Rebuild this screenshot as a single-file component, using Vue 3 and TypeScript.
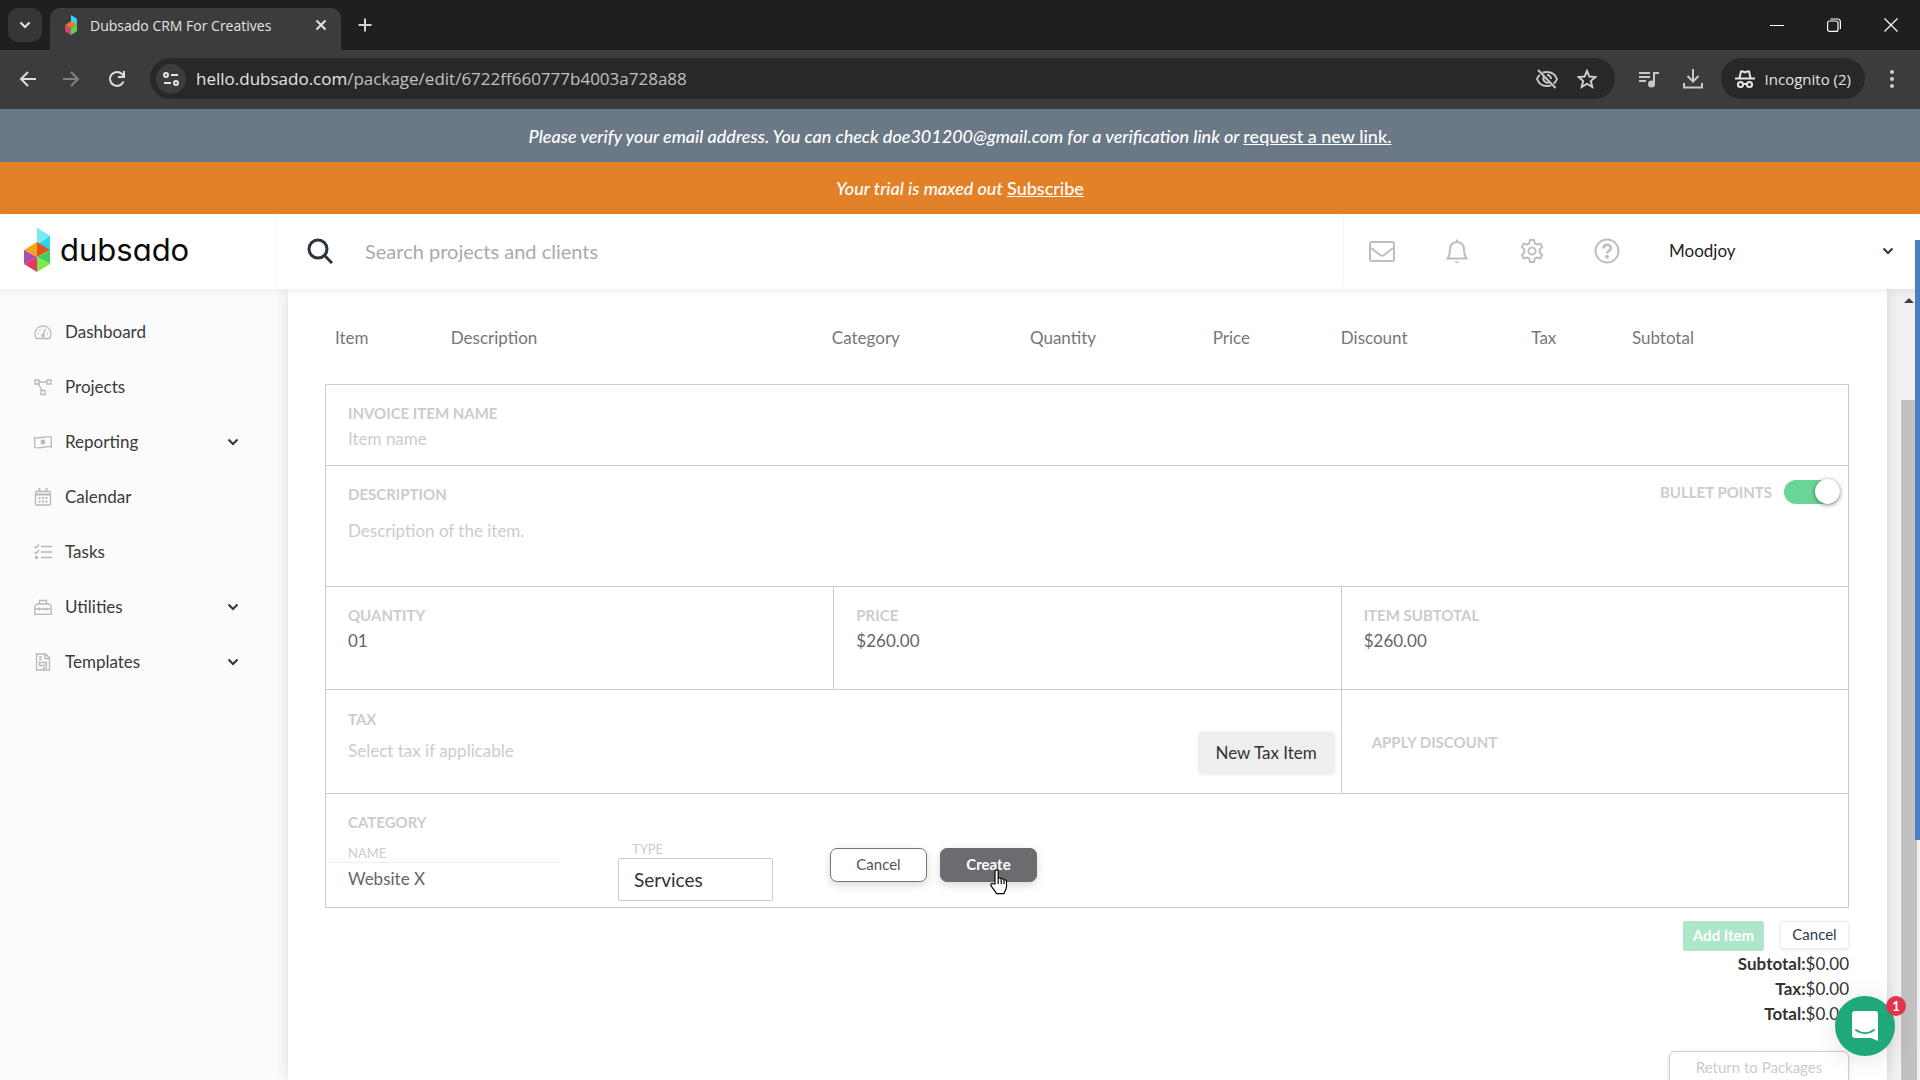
<script setup lang="ts">
import { ref } from 'vue'

interface NavItem {
  label: string
  icon: string
  expandable: boolean
}

const navItems: NavItem[] = [
  { label: 'Dashboard', icon: 'gauge', expandable: false },
  { label: 'Projects', icon: 'nodes', expandable: false },
  { label: 'Reporting', icon: 'money', expandable: true },
  { label: 'Calendar', icon: 'calendar', expandable: false },
  { label: 'Tasks', icon: 'tasks', expandable: false },
  { label: 'Utilities', icon: 'toolbox', expandable: true },
  { label: 'Templates', icon: 'doc', expandable: true },
]

const columns: string[] = ['Item', 'Description', 'Category', 'Quantity', 'Price', 'Discount', 'Tax', 'Subtotal']

const totals = [
  { label: 'Subtotal:', value: '$0.00' },
  { label: 'Tax:', value: '$0.00' },
  { label: 'Total:', value: '$0.00' },
]

const search = ref('')
const itemName = ref('')
const description = ref('')
const bulletPoints = ref(true)
const quantity = ref('01')
const price = ref('$260.00')
const subtotal = ref('$260.00')
const tax = ref('')
const categoryName = ref('Website X')
const categoryType = ref('Services')
</script>

<template>
  <div class="window">
    <div class="tabstrip">
      <button class="tab-search" aria-label="Search tabs">
        <svg width="14" height="14" viewBox="0 0 14 14" fill="none" stroke="#e4e4e4" stroke-width="2"><path d="M2.5 4.5 7 9l4.500-4.500" /></svg>
      </button>
      <div class="tab">
        <svg width="14" height="20" viewBox="0 0 26 44">
          <polygon points="13,0 26,8 26,24 13,17" fill="#37d6f0" />
          <polygon points="0,22 13,14 26,22 13,29" fill="#ee7a22" />
          <polygon points="0,22 13,29 13,44 0,36" fill="#d8407a" />
          <polygon points="13,29 26,22 26,36 13,44" fill="#58d84c" />
        </svg>
        <span class="tab-title">Dubsado CRM For Creatives</span>
        <button class="plain" aria-label="Close tab">
          <svg width="14" height="14" viewBox="0 0 14 14" stroke="#e4e4e4" stroke-width="2"><path d="M2.500 2.500l9 9M11.500 2.500l-9 9" /></svg>
        </button>
      </div>
      <button class="plain new-tab" aria-label="New tab">
        <svg width="16" height="16" viewBox="0 0 16 16" stroke="#d4d4d4" stroke-width="2"><path d="M8 1.500v13M1.500 8h13" /></svg>
      </button>
      <div class="window-controls">
        <button class="plain" aria-label="Minimize"><svg width="14" height="14" viewBox="0 0 14 14" stroke="#fff"><path d="M0 7.500h14" /></svg></button>
        <button class="plain" aria-label="Restore"><svg width="14" height="14" viewBox="0 0 14 14" fill="none" stroke="#fff" stroke-width="1.200"><rect x=".6" y="3" width="10.400" height="10.400" rx="2" /><path d="M3.400 1h7a3 3 0 0 1 3 3v7" /></svg></button>
        <button class="plain" aria-label="Close"><svg width="14" height="14" viewBox="0 0 14 14" stroke="#fff" stroke-width="1.200"><path d="M.5.5l13 13M13.500.5l-13 13" /></svg></button>
      </div>
    </div>

    <div class="toolbar">
      <button class="plain nav" aria-label="Back"><svg width="18" height="18" viewBox="0 0 18 18" fill="none" stroke="#dcdcdc" stroke-width="2"><path d="M17 9H2.500M9 2 2 9l7 7" /></svg></button>
      <button class="plain nav" aria-label="Forward"><svg width="18" height="18" viewBox="0 0 18 18" fill="none" stroke="#808080" stroke-width="2"><path d="M1 9h14.500M9 2l7 7-7 7" /></svg></button>
      <button class="plain nav" aria-label="Reload"><svg width="18" height="18" viewBox="0 0 18 18" fill="none" stroke="#dcdcdc" stroke-width="2"><path d="M15.500 11.500A7 7 0 1 1 14 4l2 2.500" /><path d="M16 1v6h-6" /></svg></button>
      <div class="address">
        <span class="site-info">
          <svg width="18" height="16" viewBox="0 0 18 16" fill="none" stroke="#e4e4e4" stroke-width="2"><circle cx="4" cy="4" r="2" /><path d="M9 4h7M2 12h7" /><circle cx="14" cy="12" r="2" /></svg>
        </span>
        <span class="url">hello.dubsado.com<span class="path">/package/edit/6722ff660777b4003a728a88</span></span>
        <button class="plain chip" aria-label="Tracking blocked"><svg width="24" height="22" viewBox="0 0 24 22" fill="none" stroke="#c8c8c8" stroke-width="2"><path d="M7.500 4.700A11 11 0 0 1 12 4c5 0 8.500 3 10 7-.7 1.800-1.800 3.400-3.300 4.600M16 17.300c-1.200.5-2.600.7-4 .7-5 0-8.500-3-10-7 .6-1.600 1.500-3 2.700-4.100" /><path d="M3 2l17.500 18" /><path d="M9 8.500a4 4 0 0 0 5.500 5.500M12 7a4 4 0 0 1 4 4" /></svg></button>
        <button class="plain chip" aria-label="Bookmark"><svg width="20" height="20" viewBox="0 0 20 20" fill="none" stroke="#d0d0d0" stroke-width="1.900"><path d="M10 1.800l2.400 5.700 6.100.5-4.700 4 1.500 6L10 14.800 4.700 18l1.500-6-4.700-4 6.100-.5z" /></svg></button>
      </div>
      <button class="plain media" aria-label="Media"><svg width="22" height="18" viewBox="0 0 22 18" fill="none" stroke="#c8c8c8" stroke-width="2"><path d="M1 3h11M1 7h11M1 11h7M16 14V3h5" /><circle cx="13.500" cy="14" r="2.500" fill="#c8c8c8" /></svg></button>
      <button class="plain media" aria-label="Downloads"><svg width="22" height="22" viewBox="0 0 22 22" fill="none" stroke="#c8c8c8" stroke-width="2"><path d="M11 1v12M5.500 8l5.500 5.500L16.500 8M2 15v4.500h18V15" /></svg></button>
      <button class="incognito">
        <svg width="20" height="20" viewBox="0 0 20 20" fill="none" stroke="#e4e4e4" stroke-width="2"><path d="M0 9.500h20M4.500 9l1.500-6.500h2L10 3.500l2-1h2L15.500 9" /><circle cx="5.500" cy="15.500" r="2.600" /><circle cx="14.500" cy="15.500" r="2.600" /><path d="M8 15h4" /></svg>
        Incognito (2)
      </button>
      <button class="plain kebab" aria-label="Menu"><svg width="4" height="18" viewBox="0 0 4 18" fill="#d0d0d0"><circle cx="2" cy="2" r="2" /><circle cx="2" cy="9" r="2" /><circle cx="2" cy="16" r="2" /></svg></button>
    </div>

    <div class="page">
      <p class="banner verify"><em>Please verify your email address. You can check doe301200@gmail.com for a verification link or&nbsp;</em><a href="#">request a new link.</a></p>
      <p class="banner trial"><em>Your trial is maxed out&nbsp;</em><a href="#">Subscribe</a></p>

      <header class="topbar">
        <a class="brand" href="#">
          <svg width="26" height="44" viewBox="0 0 26 44">
            <polygon points="13,0 26,8 26,24 13,17" fill="#2fd3ee" />
            <polygon points="13,0 26,8 13,17" fill="#7beaf6" />
            <polygon points="0,22 13,14 13,29" fill="#f5a31c" />
            <polygon points="13,14 26,22 13,29" fill="#e2521f" />
            <polygon points="0,22 13,29 0,36" fill="#a44fb0" />
            <polygon points="13,29 13,44 0,36" fill="#e23a60" />
            <polygon points="13,29 26,22 26,36" fill="#3fcf5e" />
            <polygon points="13,29 26,36 13,44" fill="#7ee84a" />
          </svg>
          <span>dubsado</span>
        </a>
        <label class="search">
          <svg width="26" height="26" viewBox="0 0 26 26" fill="none" stroke="#2b3440" stroke-width="3"><circle cx="11" cy="11" r="9" /><path d="M17.500 17.500 25 25" /></svg>
          <input v-model="search" type="text" placeholder="Search projects and clients" aria-label="Search projects and clients" />
        </label>
        <nav class="top-icons">
          <button class="plain" aria-label="Mail"><svg width="26" height="26" viewBox="0 0 26 26" fill="none" stroke="#bcbfc2" stroke-width="2"><rect x="1" y="4" width="24" height="19" rx="2" /><path d="M2 10l9 7q2 1.500 4 0l9-7" /></svg></button>
          <button class="plain" aria-label="Notifications"><svg width="26" height="26" viewBox="0 0 26 26" fill="none" stroke="#bcbfc2" stroke-width="2"><path d="M13 1.500v2M3.500 20.500C5 18.500 6 17 6 11a7 7 0 0 1 14 0c0 6 1 7.500 2.500 9.500z" /><path d="M10 23.500h6l-3 2z" fill="#bcbfc2" stroke="none" /></svg></button>
          <button class="plain" aria-label="Settings"><svg width="26" height="26" viewBox="0 0 26 26" fill="none" stroke="#bcbfc2" stroke-width="2" stroke-linejoin="round"><circle cx="13" cy="13" r="3.600" /><path d="M11 2h4l.7 3.300 2.300 1.300 3.200-1.100 2 3.500-2.500 2.200v3.600l2.500 2.200-2 3.500-3.200-1.100-2.300 1.300L15 24h-4l-.7-3.300L8 19.400l-3.200 1.100-2-3.500 2.500-2.200v-3.600L2.800 9l2-3.500L8 6.600l2.300-1.300z" /></svg></button>
          <button class="plain" aria-label="Help"><svg width="26" height="26" viewBox="0 0 26 26" fill="none" stroke="#bcbfc2" stroke-width="2"><circle cx="13" cy="13" r="11.500" /><path d="M9.500 10.500c0-5 7.500-4.500 7.500-.5 0 2.500-4 2.700-4 5.500" stroke-width="2.600" /><circle cx="13" cy="18.800" r="1" fill="#bcbfc2" /></svg></button>
        </nav>
        <button class="account">
          <span>Moodjoy</span>
          <svg width="12" height="12" viewBox="0 0 12 12" fill="none" stroke="#2b3440" stroke-width="2"><path d="M1.500 3.500 6 8l4.500-4.500" /></svg>
        </button>
      </header>

      <div class="body">
        <aside class="sidebar">
          <a v-for="item in navItems" :key="item.label" href="#" class="side-item">
            <svg width="18" height="18" viewBox="0 0 18 18" fill="none" stroke="#b6b9bc" stroke-width="1.300">
              <template v-if="item.icon === 'gauge'"><path d="M2.500 15.500A8 8 0 1 1 15.500 15.500zM9 12.500l2.500-6.500" /><circle cx="9" cy="12.500" r="1.200" /><path d="M4 10.500h1M5.500 6.500l.8.800M9 4.500v1M13 10.500h1" /></template>
              <template v-else-if="item.icon === 'nodes'"><path d="M1 2h4v4H1zM13 2h4v4h-4zM7 12.500h4v4H7zM5 4h8M4.500 6l3.500 6.500" /></template>
              <template v-else-if="item.icon === 'money'"><path d="M.7 4.500c5.500 2 11-2.500 16.600-.5v10c-5.500-2-11 2.500-16.600.5z" /><circle cx="9" cy="9" r="1.800" fill="#b6b9bc" /></template>
              <template v-else-if="item.icon === 'calendar'"><rect x="1.500" y="3.500" width="15" height="13.500" rx="1" /><path d="M1.500 6.500h15M5.500 0v4M12.500 0v4" stroke-width="1.800" /><path d="M4.500 10h9M4.500 13.500h9" stroke-width="2" stroke-dasharray="2 1.500" /></template>
              <template v-else-if="item.icon === 'tasks'"><path d="M7 3.500h11M7 9h11M7 14.500h11" stroke-width="1.600" /><path d="M.5 3.500 2 5l3-3.500M.5 9 2 10.500 5 7" /><circle cx="2.500" cy="14.500" r="1" fill="#b6b9bc" /></template>
              <template v-else-if="item.icon === 'toolbox'"><path d="M.8 10V8L3 6h12l2.200 2v8.300H.8zM.8 11h16.400M5.500 6V2.500h7V6M5.500 9.500v3M12.500 9.500v3" /></template>
              <template v-else><path d="M2.500 1h9l4 4v12h-13zM11 1v4.500h4.500M5 4h3M5 6.500h3M5.500 9.500h7v3h-7zM9 15h4" /></template>
            </svg>
            <span class="side-label">{{ item.label }}</span>
            <svg v-if="item.expandable" width="12" height="12" viewBox="0 0 12 12" fill="none" stroke="#2b3440" stroke-width="2"><path d="M1.500 3.500 6 8l4.500-4.500" /></svg>
          </a>
        </aside>

        <main class="card">
          <table class="items">
            <thead>
              <tr><th v-for="c in columns" :key="c" scope="col">{{ c }}</th></tr>
            </thead>
          </table>

          <form class="item-form" @submit.prevent>
            <div class="row row-name">
              <div class="cell">
                <label for="item-name">INVOICE ITEM NAME</label>
                <input id="item-name" v-model="itemName" type="text" placeholder="Item name" />
              </div>
            </div>
            <div class="row row-desc">
              <div class="cell">
                <label for="item-desc">DESCRIPTION</label>
                <textarea id="item-desc" v-model="description" rows="1" placeholder="Description of the item."></textarea>
              </div>
              <div class="bullets">
                <label for="bullets">BULLET POINTS</label>
                <input id="bullets" v-model="bulletPoints" type="checkbox" class="toggle" />
              </div>
            </div>
            <div class="row thirds row-amounts">
              <div class="cell">
                <label for="qty">QUANTITY</label>
                <input id="qty" v-model="quantity" type="text" />
              </div>
              <div class="cell">
                <label for="price">PRICE</label>
                <input id="price" v-model="price" type="text" />
              </div>
              <div class="cell">
                <label for="subtotal">ITEM SUBTOTAL</label>
                <input id="subtotal" v-model="subtotal" type="text" />
              </div>
            </div>
            <div class="row thirds row-tax">
              <div class="cell tax">
                <div class="tax-field">
                  <label for="tax">TAX</label>
                  <input id="tax" v-model="tax" type="text" placeholder="Select tax if applicable" />
                </div>
                <button type="button" class="new-tax">New Tax Item</button>
              </div>
              <div class="cell discount">
                <button type="button" class="plain apply">APPLY DISCOUNT</button>
              </div>
            </div>
            <div class="row row-category">
              <div class="cell">
                <span class="group-label">CATEGORY</span>
                <div class="category">
                  <div class="cat-name">
                    <label for="cat-name">NAME</label>
                    <input id="cat-name" v-model="categoryName" type="text" />
                  </div>
                  <div class="cat-type">
                    <label for="cat-type">TYPE</label>
                    <select id="cat-type" v-model="categoryType">
                      <option>Services</option>
                    </select>
                  </div>
                  <div class="cat-actions">
                    <button type="button" class="pill">Cancel</button>
                    <button type="submit" class="pill dark">Create</button>
                    <svg class="pointer" width="18" height="26" viewBox="0 0 18 26" fill="#fff" stroke="#000" stroke-width="1.200" stroke-linejoin="round"><path d="M5 15V2.500a1.600 1.600 0 0 1 3.200 0V9.500c.8-1.200 2.800-.8 3 .6 1-.9 2.600-.3 2.800 1 1-.7 2.500 0 2.500 1.500v5c0 3-1.800 4.500-2.500 7H6.500C5.500 22 2.500 19.500 1 16.500c-.8-1.600 1-2.800 2.200-1.700z" /><path d="M8.200 9.500V15M11.200 10.500V15M14 11.500V15" fill="none" /></svg>
                  </div>
                </div>
              </div>
            </div>
          </form>

          <div class="form-actions">
            <button type="button" class="add">Add Item</button>
            <button type="button" class="cancel">Cancel</button>
          </div>
          <dl class="totals">
            <div v-for="t in totals" :key="t.label"><dt>{{ t.label }}</dt><dd>{{ t.value }}</dd></div>
          </dl>
          <button type="button" class="return">Return to Packages</button>
        </main>

        <div class="gutter"></div>
        <div class="scrollbar">
          <svg width="12" height="6" viewBox="0 0 12 6"><path d="M1 6 6 1l5 5z" fill="#404040" /></svg>
          <div class="thumb"></div>
        </div>
      </div>

      <button class="chat" aria-label="Open chat">
        <svg width="28" height="32" viewBox="0 0 28 32"><path d="M4 1h20a3 3 0 0 1 3 3v27l-7-3H4a3 3 0 0 1-3-3V4a3 3 0 0 1 3-3z" fill="#fff" /><path d="M5 20q9 6.500 18 0" fill="none" stroke="#1fa97a" stroke-width="2" stroke-linecap="round" /></svg>
        <span class="count">1</span>
      </button>
    </div>
    <div class="edge"></div>
  </div>
</template>

<style>
body {
  margin: 0;
  overflow: hidden;
}
</style>

<style scoped>
.window {
  position: relative;
  display: flex;
  flex-direction: column;
  height: 100vh;
  overflow: hidden;
  background: #fff;
  font-family: Lato, "Liberation Sans", sans-serif;
  color: #333;
}
* {
  box-sizing: border-box;
}
button,
input,
select,
textarea {
  font: inherit;
  color: inherit;
}
button {
  cursor: pointer;
}
.plain {
  display: flex;
  align-items: center;
  justify-content: center;
  padding: 0;
  border: 0;
  background: none;
}

/* browser chrome */
.tabstrip,
.toolbar {
  display: flex;
  align-items: center;
  flex: none;
  font-family: "Open Sans", "Noto Sans", sans-serif;
  color: #e4e4e4;
}
.tabstrip {
  height: 50px;
  padding: 0 22px 0 8px;
  background: #1f1f1f;
}
.tab-search {
  display: flex;
  align-items: center;
  justify-content: center;
  width: 34px;
  height: 34px;
  padding: 0;
  border: 0;
  border-radius: 10px;
  background: #363636;
}
.tab {
  display: flex;
  align-items: center;
  align-self: flex-end;
  width: 291px;
  height: 42px;
  margin-left: 8px;
  padding: 0 13px 8px 14px;
  border-radius: 10px 10px 0 0;
  background: #3c3c3c;
}
.tab-title {
  flex: 1;
  margin-left: 12px;
  font-size: 14px;
  white-space: nowrap;
}
.new-tab {
  margin-left: 16px;
}
.window-controls {
  display: flex;
  gap: 43px;
  margin-left: auto;
}
.toolbar {
  height: 59px;
  padding: 0 26px 2px 8px;
  background: #3c3c3c;
}
.nav {
  width: 45px;
}
.nav:first-child {
  width: 40px;
}
.nav:nth-child(3) {
  width: 48px;
}
.address {
  display: flex;
  flex: 1;
  align-items: center;
  height: 41px;
  margin-left: 9px;
  padding: 0 18px 0 6px;
  border-radius: 21px;
  background: #282828;
}
.site-info {
  display: flex;
  align-items: center;
  justify-content: center;
  width: 30px;
  height: 30px;
  border-radius: 15px;
  background: #3c3c3c;
}
.url {
  flex: 1;
  margin-left: 10px;
  font-size: 17px;
}
.path {
  color: #c0c0c0;
}
.chip {
  margin-left: 18px;
}
.media {
  width: 44px;
}
.address + .media {
  margin-left: 12px;
}
.incognito {
  display: flex;
  align-items: center;
  gap: 10px;
  height: 41px;
  margin-left: 6px;
  padding: 0 14px;
  border: 0;
  border-radius: 21px;
  background: #282828;
  font-size: 15px;
}
.kebab {
  margin-left: 25px;
}

/* page */
.page {
  position: relative;
  display: flex;
  flex: 1;
  flex-direction: column;
  min-height: 0;
}
.banner {
  display: flex;
  flex: none;
  align-items: center;
  justify-content: center;
  height: 53px;
  margin: 0;
  color: #fff;
  font-size: 18px;
  font-weight: 500;
}
.banner a {
  color: #fff;
}
.verify {
  background: #6b7886;
}
.trial {
  height: 52px;
  background: #e38129;
}
.topbar {
  display: flex;
  flex: none;
  align-items: center;
  height: 75px;
  padding-bottom: 2px;
  background: #fff;
  position: relative;
  box-shadow: 0 2px 8px rgba(0, 0, 0, 0.07);
}
.brand {
  display: flex;
  align-items: center;
  gap: 10px;
  align-self: stretch;
  width: 276px;
  padding: 0 0 2px 24px;
  border-right: 1px solid #f6f6f6;
  color: #0a0a0a;
  font-family: Inter, sans-serif;
  font-feature-settings: "cv11";
  font-size: 31px;
  text-decoration: none;
}
.search {
  display: flex;
  flex: 1;
  align-items: center;
  align-self: stretch;
  padding-left: 31px;
  border-right: 1px solid #f4f4f4;
}
.search input {
  flex: 1;
  margin-left: 32px;
  padding: 0;
  border: 0;
  outline: 0;
  font-size: 20px;
}
.search input::placeholder {
  color: #aaa;
}
.top-icons {
  display: flex;
  gap: 49px;
  padding-left: 25px;
}
.account {
  display: flex;
  align-items: center;
  justify-content: space-between;
  width: 300px;
  padding: 0 26px 0 49px;
  border: 0;
  background: none;
  color: #222;
  font-size: 17px;
}
.body {
  display: flex;
  flex: 1;
  min-height: 0;
  overflow: hidden;
  background: #f2f2f2;
}
.sidebar {
  flex: none;
  width: 288px;
  padding-top: 15px;
  background: #fbfbfb;
}
.side-item {
  display: flex;
  align-items: center;
  height: 55px;
  padding: 0 49px 0 34px;
  color: #3a3a3a;
  font-size: 17px;
  text-decoration: none;
}
.side-label {
  flex: 1;
  margin-left: 13px;
}
.card {
  flex: 1;
  padding: 0 38px 0 37px;
  background: #fff;
  box-shadow: 0 0 12px rgba(0, 0, 0, 0.14);
}
.gutter {
  flex: none;
  width: 14px;
}
.items {
  width: 100%;
  height: 95px;
  border-collapse: collapse;
  table-layout: fixed;
}
.items th {
  padding: 2px 0 0 10px;
  color: #777;
  font-size: 17px;
  font-weight: 400;
  text-align: left;
}
.items th:nth-child(1) { width: 7.6%; }
.items th:nth-child(2) { width: 25%; }
.items th:nth-child(3) { width: 13%; }
.items th:nth-child(4) { width: 12%; }
.items th:nth-child(5) { width: 8.4%; }
.items th:nth-child(6) { width: 12.5%; }
.items th:nth-child(7) { width: 6.6%; }
.item-form {
  border: 1px solid #ccc;
}
.row {
  display: flex;
}
.thirds {
  display: grid;
  grid-template-columns: repeat(3, minmax(0, 1fr));
}
.row + .row {
  border-top: 1px solid #ccc;
}
.cell {
  flex: 1;
  padding: 19px 0 0 22px;
}
.cell + .cell {
  border-left: 1px solid #ccc;
}
.row-name { height: 80px; }
.row-desc { height: 121px; }
.row-amounts { height: 103px; }
.row-tax { height: 104px; }
.row-category { height: 114px; }
.cell label,
.group-label,
.bullets label,
.apply {
  display: block;
  color: #ccc;
  font-size: 15px;
  font-weight: 700;
  line-height: 18px;
}
.cell input {
  display: block;
  width: 90%;
  height: 32px;
  padding: 0;
  border: 0;
  outline: 0;
  background: none;
  color: #666;
  font-size: 17px;
}
.cell textarea {
  display: block;
  width: 90%;
  height: 24px;
  margin-top: 16px;
  padding: 0;
  border: 0;
  outline: 0;
  resize: none;
  font-size: 17px;
  line-height: 24px;
}
.cell input::placeholder,
.cell textarea::placeholder {
  color: #ccc;
}
.bullets {
  display: flex;
  align-items: center;
  gap: 12px;
  height: 52px;
  padding-right: 8px;
}
.toggle {
  position: relative;
  width: 56px;
  height: 24px;
  margin: 0;
  border-radius: 12px;
  appearance: none;
  background: #d0d0d0;
}
.toggle::before {
  content: "";
  position: absolute;
  top: -1px;
  left: 0;
  width: 25px;
  height: 25px;
  border-radius: 50%;
  background: #fff;
  box-shadow: 0 1px 4px rgba(0, 0, 0, 0.5);
}
.toggle:checked {
  background: #69d697;
}
.toggle:checked::before {
  right: 0;
  left: auto;
}
.tax {
  display: flex;
  grid-column: span 2;
  align-items: center;
  padding: 0 7px 0 22px;
}
.tax-field {
  flex: 1;
  align-self: flex-start;
  padding-top: 20px;
}
.tax-field input {
  margin-top: 6px;
}
.new-tax {
  width: 135px;
  height: 41px;
  margin-top: 21px;
  padding: 0;
  border: 0;
  border-radius: 3px;
  background: #eee;
  box-shadow: 0 1px 4px rgba(0, 0, 0, 0.12);
  font-size: 17px;
}
.discount {
  display: flex;
  align-items: center;
  padding: 0 0 0 30px;
}
.category {
  display: flex;
  align-items: flex-start;
}
.cat-name {
  width: 270px;
  padding-top: 13px;
}
.cat-name input {
  width: 230px;
  margin-left: -18px;
  padding-left: 18px;
  border-top: 1px solid #eee;
}
.cat-name label,
.cat-type label {
  font-size: 13px;
  font-weight: 400;
}
.cat-type {
  width: 155px;
  padding-top: 9px;
}
.cat-type label {
  padding-left: 14px;
}
.cat-type select {
  display: block;
  width: 100%;
  height: 43px;
  padding: 0 15px;
  border: 1px solid #ccc;
  border-radius: 2px;
  appearance: none;
  background: #fff;
  font-size: 19px;
}
.cat-actions {
  position: relative;
  display: flex;
  gap: 13px;
  margin: 17px 0 0 57px;
}
.pill {
  width: 97px;
  height: 34px;
  padding: 0 0 2px;
  border: 1px solid #75757c;
  border-radius: 7px;
  background: #fff;
  box-shadow: 0 3px 8px rgba(0, 0, 0, 0.16);
  color: #555;
  font-size: 15px;
}
.dark {
  background: #6b6b70;
  border-color: #6b6b70;
  color: #fff;
  font-weight: 700;
}
.pointer {
  position: absolute;
  top: 21px;
  left: 160px;
}
.form-actions {
  display: flex;
  justify-content: flex-end;
  gap: 16px;
  margin-top: 13px;
}
.form-actions button {
  height: 30px;
  padding: 0 0 2px;
  border-radius: 3px;
  font-size: 15px;
}
.form-actions .add {
  width: 81px;
  border: 0;
  background: #ade6c8;
  color: #fff;
  font-weight: 700;
}
.form-actions .cancel {
  width: 69px;
  height: 28px;
  border: 1px solid #eee;
  background: #fff;
  box-shadow: 0 1px 3px rgba(0, 0, 0, 0.1);
  color: #2f3a4a;
}
.totals {
  margin: 0;
  font-size: 17px;
  line-height: 25px;
}
.totals div {
  display: flex;
  justify-content: flex-end;
}
.totals dt {
  font-weight: 700;
}
.totals dd {
  margin: 0;
}
.return {
  display: block;
  width: 180px;
  height: 34px;
  margin: 25px 0 0 auto;
  padding: 0 0 2px;
  border: 1px solid #ccc;
  border-radius: 6px;
  background: #fff;
  box-shadow: 0 2px 6px rgba(0, 0, 0, 0.1);
  color: #ccc;
  font-size: 15px;
}
.scrollbar {
  display: flex;
  flex: none;
  flex-direction: column;
  align-items: center;
  width: 19px;
  padding-top: 8px;
  padding-right: 3px;
  background: #f0f0f0;
}
.thumb {
  flex: 1;
  width: 16px;
  margin-top: 97px;
  background: #c0c0c0;
}
.chat {
  position: absolute;
  right: 25px;
  bottom: 24px;
  display: flex;
  align-items: center;
  justify-content: center;
  width: 60px;
  height: 60px;
  padding: 0;
  border: 0;
  border-radius: 50%;
  background: #1fa97a;
  box-shadow: 0 2px 24px rgba(0, 0, 0, 0.12);
}
.count {
  position: absolute;
  top: 0;
  right: -11px;
  width: 20px;
  height: 20px;
  border-radius: 10px;
  background: #e0354b;
  color: #fff;
  font-size: 13px;
  font-weight: 700;
  line-height: 20px;
}
/* sliver of another window showing past the right border */
.edge {
  position: absolute;
  top: 240px;
  right: 0;
  width: 5px;
  height: 600px;
  background: #4a7dc4;
}
</style>
